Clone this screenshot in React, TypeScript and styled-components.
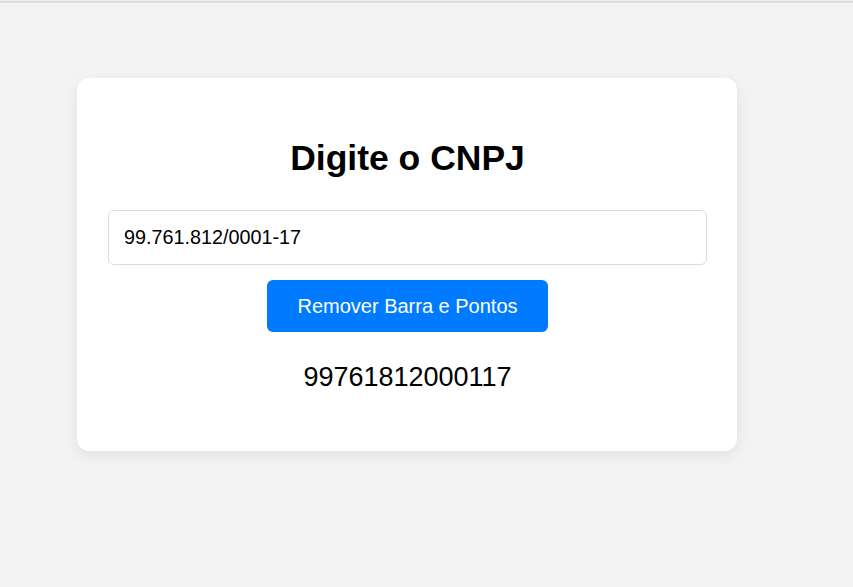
import React, { useState } from "react";
import styled, { createGlobalStyle } from "styled-components";

const GlobalStyle = createGlobalStyle`
  html, body {
    margin: 0;
    padding: 0;
    background: #f3f3f3;
    font-family: "Liberation Sans", Arial, sans-serif;
  }
`;

const TopRule = styled.div`
  height: 2px;
  border-top: 1px solid #ececec;
  background: #dedede;
`;

const Page = styled.main`
  min-height: 584px;
  padding: 75px 0 0 77px;
  box-sizing: border-box;
`;

const Card = styled.section`
  width: 660px;
  box-sizing: border-box;
  padding: 60px 30px 58px 31px;
  background: #ffffff;
  border-radius: 12px;
  box-shadow: 0 4px 14px rgba(0, 0, 0, 0.08);
  display: flex;
  flex-direction: column;
  align-items: center;
`;

const Title = styled.h1`
  margin: 0 0 32px;
  font-size: 35.5px;
  line-height: 40px;
  font-weight: 700;
  color: #000;
`;

const Input = styled.input`
  width: 100%;
  height: 55px;
  box-sizing: border-box;
  padding: 0 15px;
  border: 1px solid #dcdcdc;
  border-radius: 6px;
  font-family: "Liberation Sans", Arial, sans-serif;
  font-size: 19.8px;
  color: #000;
  outline: none;
  margin: 0 0 15px;
`;

const Button = styled.button`
  height: 52px;
  padding: 0 30px;
  border: none;
  border-radius: 6px;
  background: #007bff;
  color: #ffffff;
  font-family: "Liberation Sans", Arial, sans-serif;
  font-size: 20px;
  line-height: 22px;
  cursor: pointer;
  margin: 0 0 30px;
`;

const Result = styled.p`
  margin: 0;
  font-size: 27px;
  line-height: 31px;
  color: #000;
`;

export default function App() {
  const [value, setValue] = useState("99.761.812/0001-17");
  const [result, setResult] = useState("99761812000117");
  return (
    <>
      <GlobalStyle />
      <TopRule />
      <Page>
        <Card>
          <Title>Digite o CNPJ</Title>
          <Input value={value} onChange={(e) => setValue(e.target.value)} />
          <Button onClick={() => setResult(value.replace(/[./-]/g, ""))}>
            Remover Barra e Pontos
          </Button>
          <Result>{result}</Result>
        </Card>
      </Page>
    </>
  );
}
